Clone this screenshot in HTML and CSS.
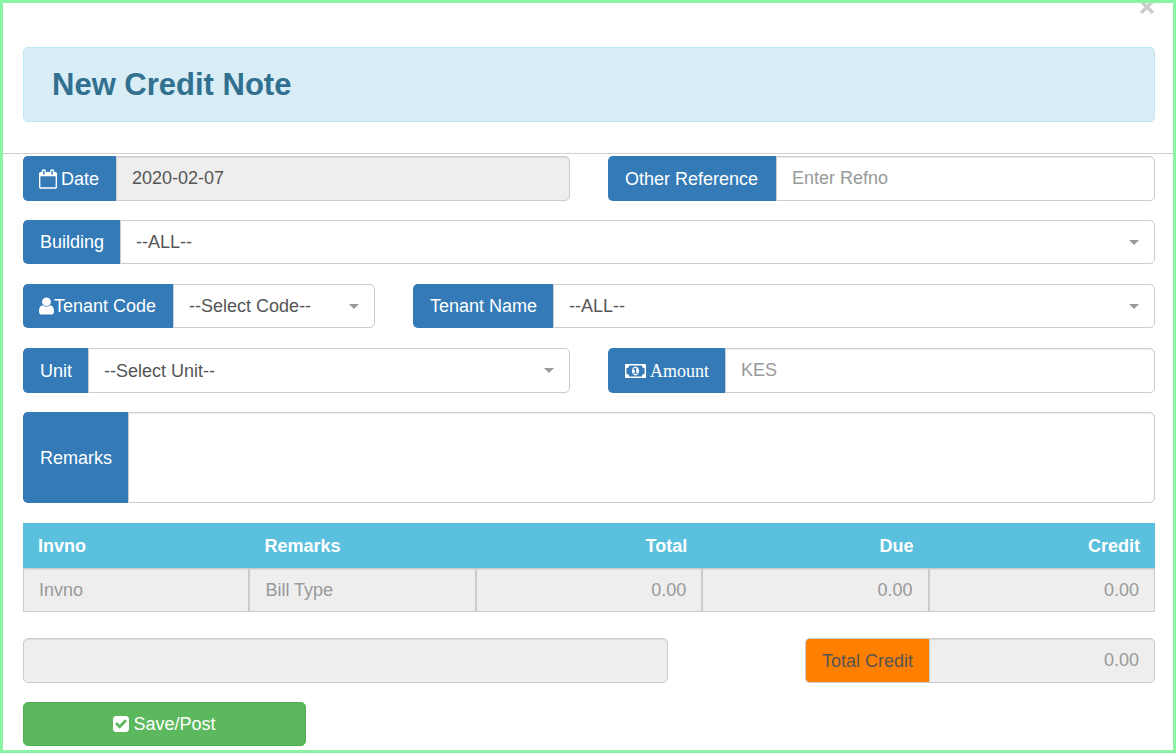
FILE: index.html
```html
<!DOCTYPE html>
<html lang="en">
<head>
<meta charset="utf-8">
<meta name="viewport" content="width=device-width, initial-scale=1">
<title>New Credit Note</title>
<link rel="stylesheet" href="styles.css">
</head>
<body>
<main class="modal">
  <header class="modal-header">
    <button type="button" class="close" aria-label="Close"><svg viewBox="0 0 12 12" aria-hidden="true"><path d="M1 1l10 10M11 1L1 11"/></svg></button>
    <h1 class="alert">New Credit Note</h1>
  </header>
  <form class="modal-body">
    <div class="row inputs">
      <div class="group half">
        <label class="addon date" for="date"><svg class="icon icon-calendar" viewBox="64 0 1664 1792" aria-hidden="true"><path d="M192 1664h1408v-1024h-1408v1024zm384-1216v-288q0-14-9-23t-23-9h-64q-14 0-23 9t-9 23v288q0 14 9 23t23 9h64q14 0 23-9t9-23zm768 0v-288q0-14-9-23t-23-9h-64q-14 0-23 9t-9 23v288q0 14 9 23t23 9h64q14 0 23-9t9-23zm384-64v1280q0 52-38 90t-90 38h-1408q-52 0-90-38t-38-90v-1280q0-52 38-90t90-38h128v-96q0-66 47-113t113-47h64q66 0 113 47t47 113v96h384v-96q0-66 47-113t113-47h64q66 0 113 47t47 113v96h128q52 0 90 38t38 90z"/></svg>Date</label>
        <input class="control" id="date" type="text" value="2020-02-07" readonly>
      </div>
      <div class="group half">
        <label class="addon wide" for="refno">Other Reference</label>
        <input class="control" id="refno" type="text" placeholder="Enter Refno">
      </div>
    </div>
    <div class="row">
      <div class="group full">
        <label class="addon" for="building">Building</label>
        <div class="picker">
          <select class="control" id="building"><option>--ALL--</option></select>
          <svg class="caret" viewBox="0 0 10 5" aria-hidden="true"><path d="M0 0h10L5 5z"/></svg>
        </div>
      </div>
    </div>
    <div class="row">
      <div class="group third">
        <label class="addon tight" for="tenant-code"><svg class="icon icon-user" viewBox="256 0 1280 1792" preserveAspectRatio="none" aria-hidden="true"><path d="M1536 1399q0 109-62.5 187t-150.5 78h-854q-88 0-150.5-78t-62.5-187q0-85 8.5-160.5t31.5-152 58.5-131 94-89 134.5-34.5q131 128 313 128t313-128q76 0 134.5 34.5t94 89 58.5 131 31.5 152 8.5 160.5zm-256-887q0 159-112.5 271.5t-271.5 112.5-271.5-112.5-112.5-271.5 112.5-271.5 271.5-112.5 271.5 112.5 112.5 271.5z"/></svg>Tenant Code</label>
        <div class="picker">
          <select class="control" id="tenant-code"><option>--Select Code--</option></select>
          <svg class="caret" viewBox="0 0 10 5" aria-hidden="true"><path d="M0 0h10L5 5z"/></svg>
        </div>
      </div>
      <div class="group two-thirds">
        <label class="addon" for="tenant-name">Tenant Name</label>
        <div class="picker">
          <select class="control" id="tenant-name"><option>--ALL--</option></select>
          <svg class="caret" viewBox="0 0 10 5" aria-hidden="true"><path d="M0 0h10L5 5z"/></svg>
        </div>
      </div>
    </div>
    <div class="row inputs">
      <div class="group half">
        <label class="addon" for="unit">Unit</label>
        <div class="picker">
          <select class="control" id="unit"><option>--Select Unit--</option></select>
          <svg class="caret" viewBox="0 0 10 5" aria-hidden="true"><path d="M0 0h10L5 5z"/></svg>
        </div>
      </div>
      <div class="group half">
        <label class="addon serif" for="amount"><svg class="icon icon-money" viewBox="0 0 1920 1792" aria-hidden="true"><path d="M768 1152h384v-96h-128v-448h-114l-148 137 77 80q42-37 55-57h2v288h-128v96zm512-256q0 70-21 142t-59.5 134-101.5 101-138 39-138-39-101.5-101-59.5-134-21-142 21-142 59.5-134 101.5-101 138-39 138 39 101.5 101 59.5 134 21 142zm512 256v-512q-106 0-181-75t-75-181h-1152q0 106-75 181t-181 75v512q106 0 181 75t75 181h1152q0-106 75-181t181-75zm128-832v1152q0 26-19 45t-45 19h-1792q-26 0-45-19t-19-45v-1152q0-26 19-45t45-19h1792q26 0 45 19t19 45z"/></svg>Amount</label>
        <input class="control" id="amount" type="text" placeholder="KES">
      </div>
    </div>
    <div class="row">
      <div class="group full">
        <label class="addon" for="remarks">Remarks</label>
        <textarea class="control remarks" id="remarks"></textarea>
      </div>
    </div>
    <table class="bills">
      <thead>
        <tr>
          <th scope="col">Invno</th>
          <th scope="col">Remarks</th>
          <th scope="col" class="num">Total</th>
          <th scope="col" class="num">Due</th>
          <th scope="col" class="num">Credit</th>
        </tr>
      </thead>
      <tbody>
        <tr>
          <td><input class="control" type="text" placeholder="Invno" aria-label="Invno" readonly></td>
          <td><input class="control" type="text" placeholder="Bill Type" aria-label="Remarks" readonly></td>
          <td><input class="control num" type="text" placeholder="0.00" aria-label="Total" readonly></td>
          <td><input class="control num" type="text" placeholder="0.00" aria-label="Due" readonly></td>
          <td><input class="control num" type="text" placeholder="0.00" aria-label="Credit" readonly></td>
        </tr>
      </tbody>
    </table>
    <div class="row inputs">
      <input class="control alone" type="text" aria-label="Summary" readonly>
      <div class="group total">
        <label class="addon orange" for="total-credit">Total Credit</label>
        <input class="control num" id="total-credit" type="text" placeholder="0.00" readonly>
      </div>
    </div>
    <button type="button" class="save"><svg class="icon icon-check" viewBox="128 0 1536 1792" aria-hidden="true"><path d="M813 1299l614-614q19-19 19-45t-19-45l-102-102q-19-19-45-19t-45 19l-467 467-211-211q-19-19-45-19t-45 19l-102 102q-19 19-19 45t19 45l358 358q19 19 45 19t45-19zm851-883v960q0 119-84.5 203.5t-203.5 84.5h-960q-119 0-203.5-84.5t-84.5-203.5v-960q0-119 84.5-203.5t203.5-84.5h960q119 0 203.5 84.5t84.5 203.5z"/></svg>Save/Post</button>
  </form>
</main>
</body>
</html>
```
FILE: styles.css
```css
*, *::before, *::after { box-sizing: border-box; }

body {
  margin: 0;
  background: #fff;
  color: #333;
  font: 18px/24px "Liberation Sans", Arial, sans-serif;
}

input, select, textarea, button { font: inherit; }

.modal {
  min-height: 100vh;
  border: 3px solid #87f5a5;
  overflow: hidden;
}

.modal-header {
  display: flex;
  flex-direction: column;
  padding: 0 18px 31px 20px;
  border-bottom: 1px solid #d0d0d0;
}

.close {
  align-self: flex-end;
  margin: -3px 1px 33px;
  padding: 0;
  border: 0;
  background: none;
}

.close svg {
  display: block;
  width: 14px;
  height: 14px;
  stroke: #ccc;
  stroke-width: 3;
}

.alert {
  margin: 0;
  padding: 18px 28px;
  border: 1px solid #bce8f1;
  border-radius: 5px;
  background: #d9edf7;
  color: #31708f;
  font-size: 31px;
  line-height: 37px;
}

.modal-body { padding: 2px 18px 4px 20px; }

.row {
  display: grid;
  grid-template-columns: repeat(12, minmax(0, 1fr));
  column-gap: 38px;
  margin-bottom: 20px;
}

.full { grid-column: span 12; }
.half { grid-column: span 6; }
.third { grid-column: span 4; }
.two-thirds { grid-column: span 8; }

.group { display: flex; }

.addon {
  display: flex;
  flex: none;
  align-items: center;
  gap: 4px;
  padding: 0 16px;
  border: 1px solid #337ab7;
  border-right: 0;
  border-radius: 5px 0 0 5px;
  background: #337ab7;
  color: #fff;
}

.date { padding: 0 17px 0 15px; }
.wide { padding: 0 18px 0 16px; }
.tight { gap: 0; padding-left: 15px; padding-right: 17px; }
.serif { font-family: "Liberation Serif", "Times New Roman", serif; }
.orange { border-color: #ccc; background: #ff8000; color: #555; }

.icon { flex: none; height: 20px; fill: currentColor; }
.icon-calendar { width: 18px; }
.icon-user { width: 15px; }
.icon-money { width: 21px; }
.icon-check { width: 16px; }

.control {
  display: block;
  flex: 1;
  width: 100%;
  min-width: 0;
  height: 44px;
  margin: 0;
  padding: 0 15px;
  border: 1px solid #ccc;
  border-radius: 0 5px 5px 0;
  outline: 0;
  background: #fff;
  box-shadow: inset 0 1px 1px rgba(0, 0, 0, 0.08);
  color: #555;
  appearance: none;
}

.control::placeholder { color: #999; opacity: 1; }
.control:read-only:not(select) { background: #eee; }
.control.remarks { height: 91px; padding: 8px 15px; resize: none; }
.control.alone { grid-column: span 7; border-radius: 5px; }
.num { text-align: right; }

.inputs { margin-bottom: 19px; }
.inputs .control { height: 45px; }

.picker { display: grid; flex: 1; align-items: center; min-width: 0; }
.picker > * { grid-area: 1 / 1; }
.picker .control { box-shadow: none; }

.caret {
  justify-self: end;
  width: 10px;
  height: 5px;
  margin-right: 16px;
  fill: #999;
  pointer-events: none;
}

.bills {
  width: 100%;
  margin-bottom: 26px;
  border-collapse: collapse;
  table-layout: fixed;
}

.bills th {
  height: 45px;
  padding: 0 15px;
  background: #5bc0de;
  color: #fff;
  text-align: left;
}

.bills th.num { text-align: right; }
.bills td { padding: 0; }
.bills .control { border-radius: 0; }

.total { grid-column: 9 / span 4; padding-left: 2px; }

.save {
  display: flex;
  align-items: center;
  justify-content: center;
  gap: 4px;
  width: 25%;
  height: 44px;
  padding: 0 16px;
  border: 1px solid #4cae4c;
  border-radius: 5px;
  background: #5cb85c;
  color: #fff;
}
```
